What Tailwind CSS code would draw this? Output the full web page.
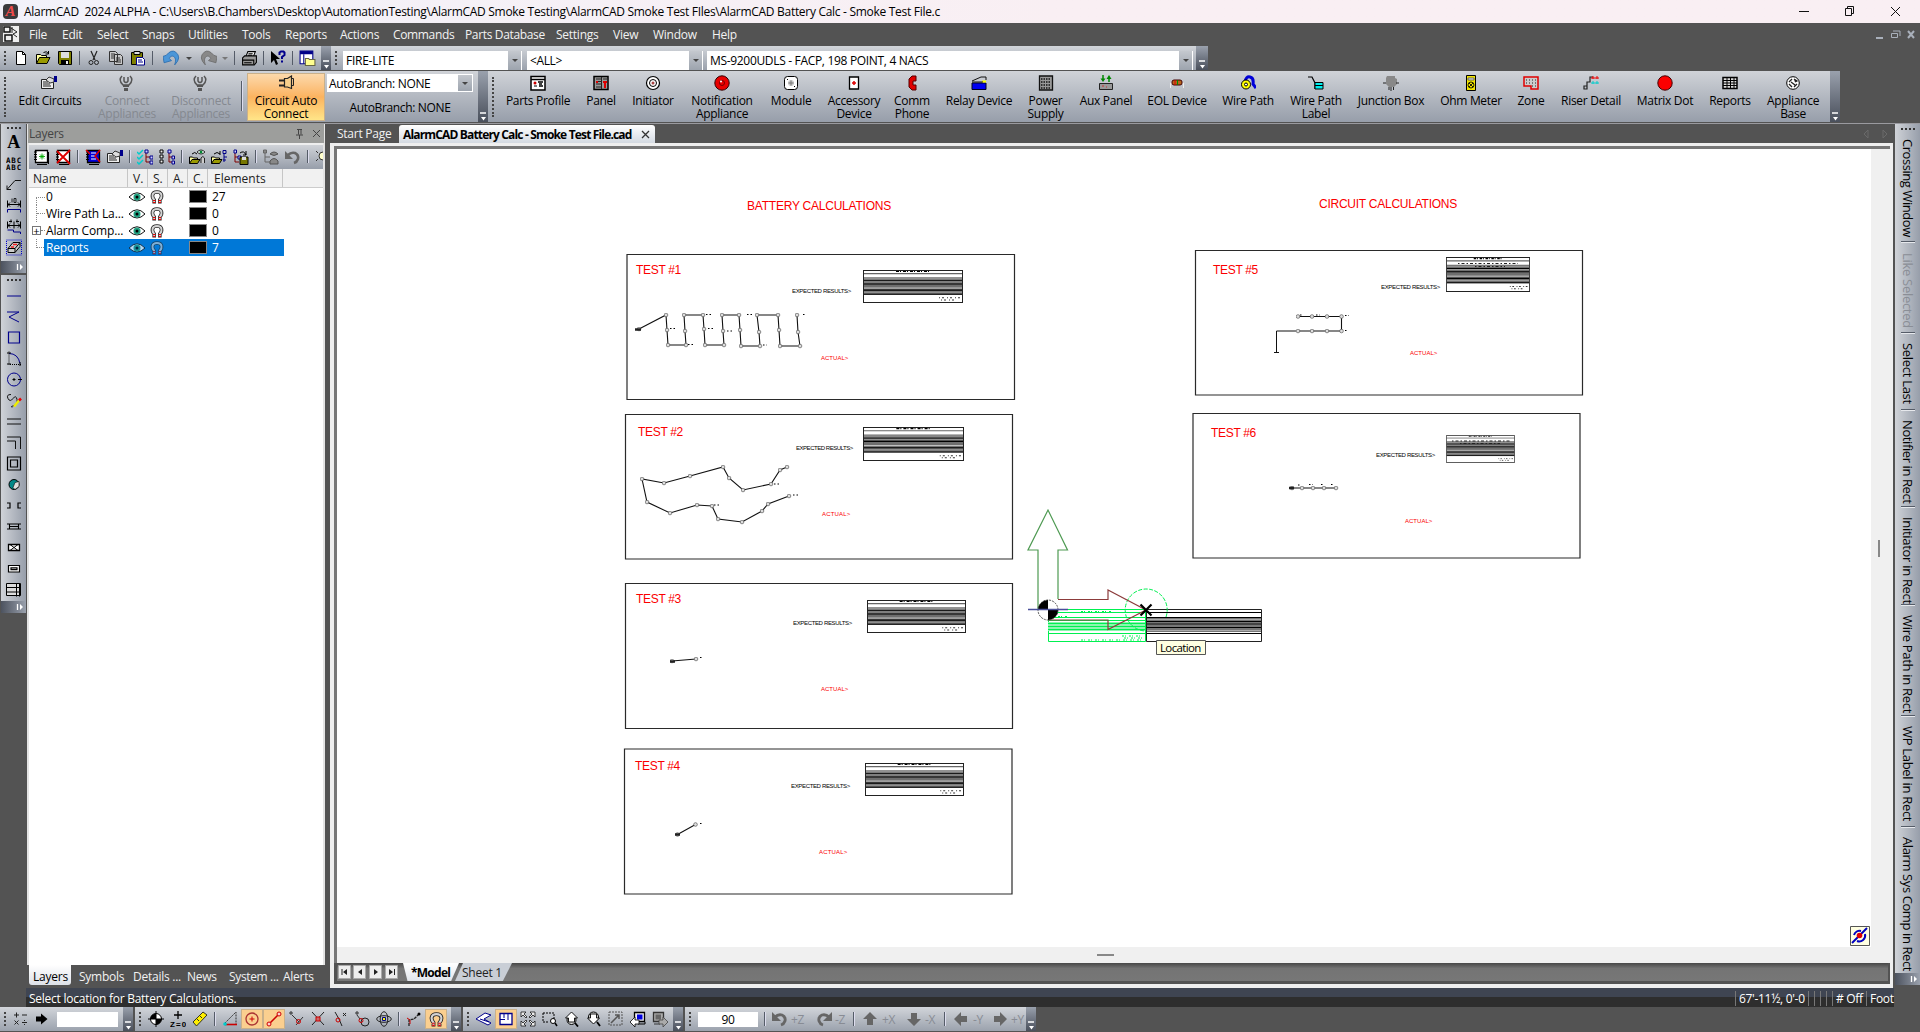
<!DOCTYPE html>
<html lang="en">
<head>
<meta charset="utf-8">
<title>AlarmCAD 2024 ALPHA</title>
<script src="https://cdn.jsdelivr.net/npm/@tailwindcss/browser@4"></script>
</head>
<body class="w-[1920px] h-[1032px] overflow-hidden bg-[#535353] font-['Open_Sans','Noto_Sans',sans-serif] text-[12px] leading-[13px] tracking-[-0.25px] text-black flex flex-col whitespace-nowrap">

<svg class="hidden">
  <defs>
    <symbol id="new" viewBox="0 0 16 16"><path d="M3.500 1.500h6l3 3v10h-9z" fill="#fff" stroke="#000"/><path d="M9.500 1.500v3h3" fill="none" stroke="#000"/></symbol>
    <symbol id="open" viewBox="0 0 16 16"><path d="M1.500 13.500v-9h4l1 1h5v2" fill="#ffffa0" stroke="#000"/><path d="M1.500 13.500l3-6h10.500l-3 6z" fill="#9a9a00" stroke="#000"/><path d="M8.500 2.500q3-2 5 1M13.500 1v3h-3" fill="none" stroke="#000"/></symbol>
    <symbol id="save" viewBox="0 0 16 16"><path d="M1.500 1.500h13v13h-12l-1-1z" fill="#808000" stroke="#000"/><path d="M4 2h8v6H4z" fill="#ddd"/><path d="M4 10h8v4H4z" fill="#000"/><path d="M9 11h2v3H9z" fill="#eee"/></symbol>
    <symbol id="cut" viewBox="0 0 16 16"><path d="M5 1l4 9M11 1l-4 9" stroke="#222" fill="none" stroke-width="1.200"/><circle cx="5" cy="12.500" r="2" fill="none" stroke="#222"/><circle cx="10.500" cy="12.500" r="2" fill="none" stroke="#222"/></symbol>
    <symbol id="copy" viewBox="0 0 16 16"><path d="M1.500 1.500h6l2 2v8h-8zM6.500 4.500h6l2 2v8h-8z" fill="#c8c8c8" stroke="#333"/><path d="M3 4h4M3 6h3M3 8h3M8 8h4M8 10h5M8 12h5" stroke="#333"/></symbol>
    <symbol id="paste" viewBox="0 0 16 16"><path d="M1.500 2.500h11v12h-11z" fill="#808000" stroke="#000"/><path d="M4 1.500h6v3H4z" fill="#ddd" stroke="#000"/><path d="M6.500 7.500h6l2 2v5.500h-8z" fill="#fff" stroke="#008"/><path d="M8 10h4M8 12h5" stroke="#008"/></symbol>
    <symbol id="undo" viewBox="0 0 16 16"><path d="M0 6l3-1q5-6 9-3 6 5-1 12 2-6-1-8-3-1-4 2l2 2-7 2z" fill="#4b96d8" stroke="#2466a8" stroke-width=".7"/></symbol>
    <symbol id="redo" viewBox="0 0 16 16"><path d="M16 6l-3-1q-5-6-9-3-6 5 1 12-2-6 1-8 3-1 4 2l-2 2 7 2z" fill="#888" stroke="#666" stroke-width=".7"/></symbol>
    <symbol id="print" viewBox="0 0 16 16"><path d="M4.500 6.500l2-5h7l-2 5" fill="#fff" stroke="#000"/><path d="M1.500 7.500l2-2h11v6l-2 2.500h-11z" fill="#999" stroke="#000"/><path d="M1 9.500h11v4M3 12h7M7 3.500h4M6.500 5h4" stroke="#000" fill="none"/></symbol>
    <symbol id="help" viewBox="0 0 16 16"><path d="M1 1v12l3-3 2 5 2-1-2-5h4z"/><path d="M9.500 5V2.500l1.500-1h2.500l1 1V5L12 7v2M12 10.500v2" stroke="#00008b" stroke-width="2" fill="none"/></symbol>
    <symbol id="lay" viewBox="0 0 16 16"><path d="M1 1h12v12H1z" fill="#fff" stroke="#008"/><path d="M1 1h12v3H1z" fill="#008"/><path d="M4.500 4v9" stroke="#008"/><path d="M6 14.500V8h3l1 1h5v5.500z" fill="#ffff90" stroke="#664"/></symbol>
    <symbol id="card" viewBox="0 0 16 16"><path d="M.5 4.500h12v9H.5z" fill="#eee" stroke="#222"/><path d="M2 7h5M2 9h7M2 11h8" stroke="#222"/><path d="M5 5l3-3 5 2v3l-4 1z" fill="#ddd" stroke="#333"/><path d="M13 1h3v6h-3z" fill="#00008b"/></symbol>
    <symbol id="plug" viewBox="0 0 16 16"><path d="M4 1q-4 4 1 9h6q5-5 1-9M6 2v4q2 3 4 0V2" fill="none" stroke="#555" stroke-width="1.500"/><path d="M5 10h6v2H5zM6 13h4v3H6z" fill="#555"/></symbol>
    <symbol id="auto" viewBox="0 0 16 16"><path d="M6.500 3.500h3l4-2.500v12.500l-4-1.500h-3z" fill="#f8cf8c" stroke="#222" stroke-width="1.200"/><path d="M1 5.500h5M1 10.500h5" stroke="#222" stroke-width="2"/><path d="M13.500 3.500h2v7h-2" fill="none" stroke="#222"/></symbol>
    <symbol id="prof" viewBox="0 0 16 16"><path d="M1 1.500h14v13.500H1z" fill="#fff" stroke="#000" stroke-width="1.500"/><path d="M1 4.500h14M8 7h5M9 9h3M9 11h4" stroke="#000" stroke-width="1.300"/><circle cx="5" cy="8" r="1.500" fill="#c00"/><path d="M4 11h3" stroke="#000"/></symbol>
    <symbol id="panel" viewBox="0 0 16 16"><path d="M1 1.500h14v13H1z" fill="#999" stroke="#000" stroke-width="1.500"/><path d="M3 4h5M3 6.500h5M3 9h5M3 12h5M8.500 2v12M10 4h4" stroke="#222"/><path d="M10 6h4v2h-1v5h-2V8h-1zM3 6h2v2H3z" fill="#d00"/></symbol>
    <symbol id="init" viewBox="0 0 16 16"><circle cx="8" cy="8" r="6.500" fill="#fff" stroke="#000" stroke-width="1.200"/><circle cx="8" cy="8" r="3.500" fill="none" stroke="#000"/><circle cx="8" cy="8" r="1.500" fill="#a44"/></symbol>
    <symbol id="bell" viewBox="0 0 16 16"><circle cx="8" cy="8" r="7.200" fill="#e80000" stroke="#300"/><circle cx="8" cy="8" r="2.500" fill="none" stroke="#700"/><circle cx="7" cy="6.500" r="1" fill="#fff"/></symbol>
    <symbol id="mod" viewBox="0 0 16 16"><rect x="1.500" y="1.500" width="13" height="13" rx="3" fill="#fff" stroke="#000"/><circle cx="8" cy="8" r="3" fill="#ccc"/><path d="M8 5.500v5M5.500 8h5" stroke="#777"/><path d="M4 4h1v1H4zM11 11h1v1h-1z"/></symbol>
    <symbol id="acc" viewBox="0 0 16 16"><path d="M3.500 2h9v12h-9z" fill="#fff" stroke="#000" stroke-width="1.300"/><path d="M8 6v4M6 8h4" stroke="#d00" stroke-width="1.500"/></symbol>
    <symbol id="phone" viewBox="0 0 16 16"><path d="M8 1h4v5H9v4h3v5H8l-3-3V4z" fill="#e00000" stroke="#500"/></symbol>
    <symbol id="relay" viewBox="0 0 16 16"><path d="M1 8h14v6.500H1z" fill="#0000f0" stroke="#002"/><path d="M11 6.500h4" stroke="#ff0" stroke-width="2"/><path d="M1 6l9-4h5v3M1 7h11" fill="none" stroke="#111"/></symbol>
    <symbol id="pwr" viewBox="0 0 16 16"><path d="M1.500 1h13v14h-13z" fill="#999" stroke="#111" stroke-width="1.300"/><path d="M3 4h10M3 7h10M3 10h10M3 13h10" stroke="#111" stroke-width="1.600" stroke-dasharray="1.500 1"/></symbol>
    <symbol id="aux" viewBox="0 0 16 16"><path d="M1.500 8.500h13v6h-13z" fill="#999" stroke="#222"/><path d="M5 0v4M11 7V3" stroke="#080" stroke-width="1.500"/><path d="M2.500 3.500h5L5 7zM8.500 4h5L11 0z" fill="#080"/><path d="M4 11h2M8 12h1" stroke="#c33"/></symbol>
    <symbol id="eol" viewBox="0 0 16 16"><path d="M1.500 13V8h13v5" fill="none" stroke="#eee"/><rect x="3" y="5" width="10" height="5" rx="2" fill="#b5651d" stroke="#400"/><path d="M6 5v5" stroke="#d00"/><path d="M8.500 5v5" stroke="#080"/></symbol>
    <symbol id="wire" viewBox="0 0 16 16"><path d="M5 7q1-6 5-5 4 1 3 7l3 4" stroke="#0000d8" stroke-width="3" fill="none"/><circle cx="6" cy="9.500" r="4.500" fill="#ff0" stroke="#000"/><circle cx="6" cy="9.500" r="1.500" fill="#fff" stroke="#000"/></symbol>
    <symbol id="wlab" viewBox="0 0 16 16"><path d="M0 2h4l3 6v6" fill="none" stroke="#000" stroke-width="1.200"/><path d="M7 7.500h8v6.500H7zM7 10.500h8" fill="#0ee" stroke="#000"/></symbol>
    <symbol id="junc" viewBox="0 0 16 16"><path d="M4 1h8v2l2 1v5l-3 3H6l-3-3V3z" fill="#888"/><path d="M0 8h3M13 8h3M8 12v4M10.500 12v3M6 12v3" stroke="#222"/></symbol>
    <symbol id="ohm" viewBox="0 0 16 16"><path d="M3.500.5h9v15h-9z" fill="#f2e500" stroke="#000"/><path d="M5 3h6v2H5z" fill="#eef" stroke="#665"/><circle cx="8" cy="10" r="3" fill="none" stroke="#220"/><path d="M6 8l4 4M10 8l-4 4" stroke="#220"/></symbol>
    <symbol id="zone" viewBox="0 0 16 16"><path d="M1 2h14v12H8v-3H1z" fill="#ccc" stroke="#e00000" stroke-width="1.500"/><path d="M3 5h10M3 8h10M9 11h4" stroke="#222" stroke-dasharray="1 2"/></symbol>
    <symbol id="riser" viewBox="0 0 16 16"><path d="M1 11h3v3H1zM4 13V7h3V2h3" fill="none" stroke="#222" stroke-width="1.200"/><path d="M8 3h8M10 1v3M14 1v3" stroke="#e00"/><path d="M8 8h8M10 6v3M14 6v3" stroke="#0cc"/></symbol>
    <symbol id="dot" viewBox="0 0 16 16"><circle cx="8" cy="8" r="7.200" fill="#fb0000" stroke="#400"/></symbol>
    <symbol id="rep" viewBox="0 0 16 16"><path d="M1 2.500h14v11H1z" fill="#ddd" stroke="#000" stroke-width="1.500"/><path d="M1 5.500h14M1 8h14M1 10.500h14M5 3v10M8.500 3v10M12 3v10" stroke="#000"/></symbol>
    <symbol id="base" viewBox="0 0 16 16"><circle cx="8" cy="8" r="6.300" fill="#fff" stroke="#000"/><path d="M4 7l3-3M9 4l3 2-2 1M4 9l3 3M12 9l-3 3M6 7l4 3" stroke="#222" stroke-width="1.300"/></symbol>

    <symbol id="eye" viewBox="0 0 16 10"><path d="M0 5Q8-3.500 16 5 8 13 0 5z" fill="#fff" stroke="#111"/><circle cx="8" cy="5" r="3.500" fill="#20a080"/><circle cx="8" cy="5" r="1.500"/></symbol>
    <symbol id="mag" viewBox="0 0 14 14"><path d="M4.200 13.500V10C1.500 7 1.500 2 7 2s5.500 5 2.800 8v3.500" stroke="#222" stroke-width="3.600" fill="none"/><path d="M4.200 13V10C1.500 7 1.500 2 7 2s5.500 5 2.800 8v3" stroke="#d4d4d4" stroke-width="2" fill="none"/><path d="M3 10.500h2.300M8.700 10.500H11M3 12.500h2.300M8.700 12.500H11" stroke="#e00"/></symbol>
    <symbol id="lnew" viewBox="0 0 16 16"><path d="M2.500 1.500h12v12h-12z" fill="#fff" stroke="#000" stroke-width="1.300"/><path d="M14 15.500H4M15.500 3v12" stroke="#000"/><path d="M1 3h3M1 5.500h3M1 8h3M1 10.500h3" stroke="#000"/><path d="M9 4.500v6M6 7.500h6M7 5.500l4 4M11 5.500l-4 4" stroke="#0a0" stroke-width=".9"/></symbol>
    <symbol id="ldel" viewBox="0 0 16 16"><path d="M2.500 1.500h12v12h-12z" fill="#fff" stroke="#000" stroke-width="1.300"/><path d="M14 15.500H4M1 3h3M1 5.500h3M1 8h3M1 10.500h3" stroke="#000"/><path d="M2 2l13 13M15 1L2 14" stroke="#d00" stroke-width="1.800"/></symbol>
    <symbol id="lblu" viewBox="0 0 16 16"><path d="M2.500 1.500h12v12h-12z" fill="#00d" stroke="#000" stroke-width="1.300"/><path d="M14 15.500H4M1 3h3M1 5.500h3M1 8h3M1 10.500h3" stroke="#000"/><path d="M6 4h5M6 7h4M6 10h5" stroke="#fff"/><path d="M1 1l4 4M15 1l-5 6 5 6" stroke="#d00" stroke-width="1.500" fill="none"/></symbol>
    <symbol id="tree1" viewBox="0 0 16 16"><path d="M0 3l2 2 4-4M0 8l2 2 4-4M0 13l2 2 4-4" stroke="#0cc" fill="none" stroke-width="1.500"/><path d="M9 2v11h4M9 8h4" stroke="#800000" fill="none"/><path d="M8 1h3v3H8zM13 7h3v3h-3zM13 12h3v3h-3z" fill="#ccf" stroke="#008"/></symbol>
    <symbol id="tree2" viewBox="0 0 16 16"><path d="M1 1h3v3H1zM1 6h3v3H1zM1 11h3v3H1z" fill="#eee" stroke="#000"/><path d="M10 2v11h4M10 8h4" stroke="#800000" fill="none"/><path d="M9 1h3v3H9zM13 7h2.500v3H13zM13 12h2.500v3H13z" fill="#ccf" stroke="#008"/></symbol>
    <symbol id="tree3" viewBox="0 0 16 16"><path d="M2 2v11h4M2 8h4" stroke="#800000" fill="none"/><path d="M1 1h2.500v3H1zM5 7h3v3H5z" fill="#ccf" stroke="#008"/><path d="M7 8h8v7.500H7z" fill="#770" stroke="#000"/><path d="M9 8h4v3H9z" fill="#ddd"/><path d="M7 4q4-3 6 2M13 2v4h-3" fill="none" stroke="#000"/></symbol>
    <symbol id="topen" viewBox="0 0 16 16"><path d="M.5 14.500V8h3l1 1h4v2" fill="#ffffa0" stroke="#000"/><path d="M.5 14.500l2.500-4h8l-2.500 4z" fill="#9a9a00" stroke="#000"/><path d="M3 5q3-3 6 0M9 2v4" fill="none" stroke="#000"/><path d="M12 1.500h3v3h-3zM13 4v9M13 8h3M12 11h3" fill="none" stroke="#008"/></symbol>
    <symbol id="eopen" viewBox="0 0 16 16"><path d="M.5 14.500V8h3l1 1h4v2" fill="#ffffa0" stroke="#000"/><path d="M.5 14.500l2.500-4h8l-2.500 4z" fill="#9a9a00" stroke="#000"/><path d="M3 5q3-3 5 0" fill="none" stroke="#000"/><path d="M8 3q4-4 8 0-4 4-8 0z" fill="#fff" stroke="#000" stroke-width=".8"/><circle cx="12" cy="3" r="1.500" fill="#083"/><path d="M12 14V9q2-3 3.500 0v5" fill="#ccc" stroke="#222"/></symbol>
    <symbol id="tgray" viewBox="0 0 16 16"><path d="M2 2v11h5M2 8h5" stroke="#666" fill="none"/><path d="M.5 1h3v3h-3z" fill="#888" stroke="#666"/><path d="M7 5q4-4 8 0-4 3-8 0M7 12q4-5 8 0v3H7z" fill="#888" stroke="#555"/></symbol>
    <symbol id="back" viewBox="0 0 16 16"><path d="M3 6q3-3 7-2 4 2 3 6-1 3-4 4" stroke="#666" stroke-width="2.600" fill="none"/><path d="M0 2v8h8z" fill="#666"/></symbol>

    <symbol id="abc" viewBox="0 0 16 16"><g font-family="DejaVu Sans Mono,monospace" font-size="7.500" font-weight="bold"><text x="0" y="7" textLength="15">ABC</text><text x="0" y="14.500" textLength="15">ABC</text></g></symbol>
    <symbol id="lead" viewBox="0 0 16 16"><path d="M1 13l8-9h6" fill="none" stroke="#111"/><path d="M1 9v4h4" fill="none" stroke="#111"/></symbol>
    <symbol id="dim" viewBox="0 0 16 16"><path d="M1.500 3v7M14.500 3v7M1 7h14M4 5L2 7l2 2M12 5l2 2-2 2" stroke="#000" fill="none"/><path d="M6 1v4M8 1h2v4H8z" stroke="#000" fill="none" stroke-width=".8"/><path d="M1.500 15v-3h13v3" fill="none" stroke="#008"/></symbol>
    <symbol id="dim2" viewBox="0 0 16 16"><path d="M1.500 3v7M8 3v7M14.500 3v7M1 7h14M4 5L2 7l2 2M12 5l2 2-2 2M3 3h3M10 3h3M5 1v3M11 1v3" stroke="#000" fill="none"/><path d="M1.500 11.500h6v2h7v2" fill="none" stroke="#008"/></symbol>
    <symbol id="erase" viewBox="0 0 16 16"><path d="M.5.500h15v15H.5z" fill="none" stroke="#00c" stroke-dasharray="1 1"/><path d="M2 9l5-6h7v4l-5 6H2z" fill="#ccc" stroke="#000"/><path d="M2 9h7v4M9 9l5-6" fill="none" stroke="#000"/><path d="M5 7.500h3M7 5h4" stroke="#e22" stroke-width="1.500"/></symbol>
    <symbol id="line" viewBox="0 0 16 16"><path d="M1 8.500h14" stroke="#00008b"/></symbol>
    <symbol id="poly" viewBox="0 0 16 16"><path d="M1 3.500h12L3 8.500l10 5" fill="none" stroke="#00008b"/></symbol>
    <symbol id="sq" viewBox="0 0 16 16"><path d="M2.500 2.500h11v11h-11z" fill="none" stroke="#00008b" stroke-width="1.200"/></symbol>
    <symbol id="arc" viewBox="0 0 16 16"><path d="M3 3q9 0 11 10" fill="none" stroke="#00008b"/><path d="M3 1v13h12" fill="none" stroke="#000" stroke-dasharray="1 1"/><path d="M1 2.500h4M14 11.500v4M1 13.500h4" stroke="#000"/></symbol>
    <symbol id="circ" viewBox="0 0 16 16"><circle cx="8" cy="8" r="6.500" fill="none" stroke="#00008b"/><path d="M8 6.500v3M6.500 8h3M12 8h4" stroke="#000"/></symbol>
    <symbol id="curve" viewBox="0 0 16 16"><path d="M5 2Q0 2 2 6t5 0 4 1-3 6-2 2" fill="none" stroke="#111"/><path d="M8 14l5-6" stroke="#ee0" stroke-width="2.500"/><path d="M13 8l2-2" stroke="#e00" stroke-width="2.500"/></symbol>
    <symbol id="dbl" viewBox="0 0 16 16"><path d="M1 5.500h14M1 10.500h14" stroke="#111"/></symbol>
    <symbol id="corner" viewBox="0 0 16 16"><path d="M1 2.500h13.500v12M1 6.500h8.500v8" fill="none" stroke="#111"/></symbol>
    <symbol id="sq2" viewBox="0 0 16 16"><path d="M1.500 1.500h13v13h-13zM4.500 4.500h7v7h-7z" fill="none" stroke="#000" stroke-width="1.200"/></symbol>
    <symbol id="ball" viewBox="0 0 16 16"><circle cx="8" cy="8" r="5" fill="#088" stroke="#000"/><path d="M13 5v5l-4 3-2-2 2-5z" fill="#ddd" stroke="#000" stroke-width=".6"/></symbol>
    <symbol id="gap" viewBox="0 0 16 16"><path d="M1 5.500h3v5H1M15 5.500h-3v5h3" fill="none" stroke="#000" stroke-width="1.200"/></symbol>
    <symbol id="win1" viewBox="0 0 16 16"><path d="M1 5.500h14M1 10.500h14M3.500 5v6M12.500 5v6M4 8h8" stroke="#000" stroke-width="1.100"/></symbol>
    <symbol id="win2" viewBox="0 0 16 16"><path d="M2.500 5h11v6h-11z" fill="#fff" stroke="#000" stroke-width="1.300"/><path d="M4 5l8 6M12 5l-8 6" stroke="#000"/></symbol>
    <symbol id="win3" viewBox="0 0 16 16"><path d="M2.500 5h11v6.500h-11zM5 7.300h6v1.900H5z" fill="#fff" stroke="#000" stroke-width="1.200"/></symbol>
    <symbol id="grid" viewBox="0 0 16 16"><path d="M.5 2h14v12H.5z" fill="#ddd" stroke="#000"/><path d="M0 6h15M0 10.500h15M10.500 2v13M13.500 2v13" stroke="#000"/></symbol>

    <symbol id="calc" viewBox="0 0 16 16"><path d="M1 4h5M3.500 1.500v5M9 4h5M1.500 9.500l4 4M5.500 9.500l-4 4M9 11.500h5M11.500 9v1M11.500 13v1" stroke="#222"/></symbol>
    <symbol id="arr" viewBox="0 0 16 16"><path d="M3 5.500h5V2.500L14.500 8 8 13.500v-3H3z"/></symbol>
    <symbol id="orig" viewBox="0 0 16 16"><circle cx="8" cy="8" r="5.500" fill="#fff" stroke="#000"/><path d="M8 8V2.500A5.500 5.500 0 0 0 2.500 8zM8 8v5.500A5.500 5.500 0 0 0 13.500 8z"/><path d="M8 0v16M0 8h16" stroke="#000"/></symbol>
    <symbol id="z0" viewBox="0 0 16 16"><path d="M8 0v8M4 4h8" stroke="#000" stroke-width="1.300"/><text x="0" y="15.500" font-size="8" font-weight="bold" font-family="Liberation Sans" textLength="16">Z=0</text></symbol>
    <symbol id="ruler" viewBox="0 0 16 16"><path d="M1 11L11 1l4 3L4.500 15z" fill="#fe0" stroke="#332"/><path d="M5 8l2 2M8 5l2 2" stroke="#332"/></symbol>
    <symbol id="tri" viewBox="0 0 16 16"><path d="M3 12L14 1v12" stroke="#333" fill="none" stroke-dasharray="2 1"/><path d="M3 13.500h12" stroke="#c00" stroke-width="1.600"/><circle cx="3" cy="13" r="1.800" fill="#0cc"/></symbol>
    <symbol id="sc" viewBox="0 0 16 16"><circle cx="8" cy="8" r="6" fill="none" stroke="#a33" stroke-width="1.300"/><path d="M8 5.500v5M5.500 8h5" stroke="#c00"/></symbol>
    <symbol id="se" viewBox="0 0 16 16"><path d="M3 13L13 3" stroke="#c00" stroke-width="1.500"/><circle cx="3" cy="13" r="2" fill="#fcc" stroke="#c00"/><circle cx="13" cy="3" r="2" fill="#fcc" stroke="#c00"/></symbol>
    <symbol id="sp" viewBox="0 0 16 16"><path d="M1 2h4M3 0v4M4 4l7 7M8 14l7-8" stroke="#333" fill="none"/><circle cx="10.500" cy="10.500" r="2" fill="none" stroke="#c00"/></symbol>
    <symbol id="sx" viewBox="0 0 16 16"><path d="M2 1l12 13M14 1L2 14" stroke="#222"/><path d="M6 6h4v4H6z" fill="#c66" stroke="#c00"/></symbol>
    <symbol id="sn" viewBox="0 0 16 16"><path d="M3 1l4 7 3 7" stroke="#222" fill="none"/><circle cx="6" cy="9" r="2" fill="none" stroke="#c00"/><path d="M11 2l3 3M14 2l-3 3" stroke="#222"/></symbol>
    <symbol id="st" viewBox="0 0 16 16"><path d="M1 2h4M3 0v4M3 4l3 4" stroke="#333"/><circle cx="11" cy="11" r="4" fill="none" stroke="#222"/><circle cx="7" cy="9.500" r="2" fill="none" stroke="#c00"/></symbol>
    <symbol id="sg" viewBox="0 0 16 16"><ellipse cx="8" cy="8" rx="7.300" ry="3.300" fill="none" stroke="#222"/><ellipse cx="8" cy="8" rx="3.800" ry="7.300" fill="none" stroke="#222"/><path d="M6.500 6.500h3v3h-3z" fill="#ff0" stroke="#008"/></symbol>
    <symbol id="sl" viewBox="0 0 16 16"><path d="M3 15V9l5-1 5-5" fill="none" stroke="#222" stroke-width="1.300" stroke-dasharray="3 .8"/><path d="M1 7l3 2v4" stroke="#c00" fill="none"/><circle cx="13" cy="3" r="1.500"/></symbol>
    <symbol id="v3" viewBox="0 0 16 16"><path d="M0 8l9-6 6 2-7 4 7 4-3 2z" fill="#fff" stroke="#00008b"/><path d="M4 8l9 3" stroke="#00008b"/></symbol>
    <symbol id="vp" viewBox="0 0 16 16"><path d="M2 2.500h12v11H2z" fill="#fff" stroke="#00008b" stroke-width="1.300"/><path d="M6 3v4M10 3v6M2 8.500h5" stroke="#00008b"/></symbol>
    <symbol id="ext" viewBox="0 0 16 16"><path d="M1 1h5L4 3l3 3-1 1-3-3-2 2zM15 1h-5l2 2-3 3 1 1 3-3 2 2zM1 15h5l-2-2 3-3-1-1-3 3-2-2zM15 15h-5l2-2-3-3 1-1 3 3 2-2z" fill="#eee" stroke="#000" stroke-width=".7"/></symbol>
    <symbol id="zw" viewBox="0 0 16 16"><path d="M1 2h11v7M1 2v9h6" fill="none" stroke="#000" stroke-dasharray="2 1"/><circle cx="11" cy="10" r="2.500" fill="#fff" stroke="#000"/><path d="M13 12l2 3" stroke="#000" stroke-width="1.500"/></symbol>
    <symbol id="zin" viewBox="0 0 16 16"><circle cx="7.500" cy="9" r="4.500" fill="#ddd" stroke="#000"/><path d="M7.500 1l6 6h-3v4h-6V7h-3z" fill="#fff" stroke="#000" stroke-width=".9"/><path d="M11 12l3 3.500" stroke="#000" stroke-width="1.800"/></symbol>
    <symbol id="zout" viewBox="0 0 16 16"><circle cx="7.500" cy="6" r="5" fill="#ddd" stroke="#000"/><path d="M7.500 13l6-6h-3V3h-6v4h-3z" fill="#fff" stroke="#000" stroke-width=".9"/><path d="M11 11l3 4" stroke="#000" stroke-width="1.800"/></symbol>
    <symbol id="zg" viewBox="0 0 16 16"><path d="M1 1h13v13H1z" fill="none" stroke="#555" stroke-dasharray="2 1"/><path d="M3 12l8-8M11 8V4H7" stroke="#555" stroke-width="1.500" fill="none"/></symbol>
    <symbol id="vprev" viewBox="0 0 16 16"><path d="M4.500 1.500h10v9h-10z" fill="#eee" stroke="#000" stroke-width="1.300"/><path d="M7 3.500h5.500v5H7z" fill="#0000e0"/><path d="M8 13h7v-2" fill="none" stroke="#000"/><path d="M0 11l5-5v3h4v4H5v3z" fill="#fff" stroke="#000" stroke-width=".8"/></symbol>
    <symbol id="vnext" viewBox="0 0 16 16"><path d="M1.500 1.500h10v9h-10z" fill="#aaa" stroke="#333" stroke-width="1.300"/><path d="M3.500 3.500H9v5H3.500z" fill="#666"/><path d="M2 13h6" stroke="#333"/><path d="M16 11l-5-5v3H7v4h4v3z" fill="#aaa" stroke="#444" stroke-width=".8"/></symbol>
    <symbol id="rl" viewBox="0 0 16 16"><path d="M3 6q3-3 7-2 4 2 3 6-1 3-4 4" stroke="#666" stroke-width="2.800" fill="none"/><path d="M0 1v9h9z" fill="#666"/></symbol>
    <symbol id="rr" viewBox="0 0 16 16"><path d="M13 6q-3-3-7-2-4 2-3 6 1 3 4 4" stroke="#666" stroke-width="2.800" fill="none"/><path d="M16 1v9H7z" fill="#666"/></symbol>
    <symbol id="up" viewBox="0 0 16 16"><path d="M8 1l7 7h-4v6H5V8H1z" fill="#666"/></symbol>
    <symbol id="dn" viewBox="0 0 16 16"><path d="M8 15l7-7h-4V2H5v6H1z" fill="#666"/></symbol>
    <symbol id="lf" viewBox="0 0 16 16"><path d="M1 8l7-7v4h6v6H8v4z" fill="#666"/></symbol>
    <symbol id="rt" viewBox="0 0 16 16"><path d="M15 8L8 1v4H2v6h6v4z" fill="#666"/></symbol>
    <symbol id="ovf" viewBox="0 0 8 10"><path d="M1 1h6" stroke="#fff" stroke-width="1.500"/><path d="M2 5h5L4.500 8.500z" fill="#fff"/></symbol>
    <symbol id="ovr" viewBox="0 0 8 8"><path d="M1.500 1v6" stroke="#fff" stroke-width="1.300"/><path d="M4 1v6l3-3z" fill="#fff"/></symbol>

    <symbol id="tbl" viewBox="0 0 100 32" preserveAspectRatio="none">
      <path d="M0 0h100v32H0z" fill="#fff"/><path d="M1 7h98v17H1z" fill="#6e6e6e"/>
      <path d="M1 10.500h98M1 13.500h98M1 19.500h98M1 23.500h98" stroke="#000"/>
      <path d="M1 8.500h98M1 11.500h98M1 21.500h98" stroke="#aaa" stroke-width=".8"/><path d="M1 17.500h98" stroke="#ddd" stroke-width=".8"/><path d="M1 3.500h98" stroke="#666"/>
      <path d="M33 1.500h33" stroke="#000" stroke-dasharray="3 1 1 2"/><path d="M76 27h22M78 29h14" stroke="#333" stroke-dasharray="1 2 2 3"/>
      <path d="M.5.500h99v31H.5z" fill="none" stroke="#222"/>
    </symbol>
  </defs>
</svg>

<!-- Title bar -->
<header class="h-[23px] shrink-0 flex items-center bg-linear-to-r from-[#f2f2fa] to-[#f9eff3] to-55% pl-[3px]">
  <div class="size-[15px] bg-[#3a3a3c] rounded-sm flex items-center justify-center text-[#f04a4a] font-['Liberation_Serif',serif] font-bold italic text-[15px]">A</div>
  <div class="ml-[6px] whitespace-pre tracking-[-0.295px]">AlarmCAD  2024 ALPHA - C:\Users\B.Chambers\Desktop\AutomationTesting\AlarmCAD Smoke Testing\AlarmCAD Smoke Test FIles\AlarmCAD Battery Calc - Smoke Test File.c</div>
  <svg class="ml-auto mr-[14px] w-[112px] h-[14px] -mt-[2px]" fill="none" stroke="#111"><path d="M5 7.500h10M51.500 4.500h6v7h-6zM53.500 4V2.500h6v7h-2M97 3l9 9M106 3l-9 9"/></svg>
</header>

<!-- Menu -->
<nav class="h-[23px] shrink-0 flex items-center text-[#f2f2f2] pl-[3px] pb-px">
  <svg class="size-[16px]" viewBox="0 0 16 16"><path d="M0 0h16v16H0z" fill="#eee"/><path d="M1 1h6v5H1zM2 9h7v6H2z" fill="none" stroke="#111" stroke-width="1.500"/><path d="M8 2l6 4-4 2 4 3M9 1v6" stroke="#222" fill="none"/></svg>
  <div class="ml-[10px] w-[33px]">File</div><div class="w-[35px]">Edit</div><div class="w-[45px]">Select</div><div class="w-[46px]">Snaps</div><div class="w-[54px]">Utilities</div><div class="w-[43px]">Tools</div><div class="w-[55px]">Reports</div><div class="w-[53px]">Actions</div><div class="w-[72px] tracking-[-0.35px]">Commands</div><div class="w-[91px] tracking-[-0.35px]">Parts Database</div><div class="w-[57px]">Settings</div><div class="w-[40px]">View</div><div class="w-[59px]">Window</div><div>Help</div>
  <svg class="ml-auto mr-[5px] w-[40px] h-[14px]" fill="none" stroke="#a9b0bb"><path d="M1 11h7" stroke-width="2"/><path d="M16.500 6.500h6v4h-6zM18 4h7v5"/><path d="M33 4l6 7M39 4l-6 7" stroke-width="2"/></svg>
</nav>

<!-- Toolbar row 1 -->
<div class="h-[25px] shrink-0 flex">
  <div class="w-[321px] h-[24px] flex items-center bg-linear-to-b from-[#d2d5da] to-[#9ba2ad]">
    <div class="ml-1 mr-[4px] w-[2px] h-[14px] border-l-2 border-dotted border-[#444]"></div>
    <div class="w-[22px] flex justify-center"><svg class="size-[16px]"><use href="#new"/></svg></div>
    <div class="w-[22px] flex justify-center"><svg class="size-[16px]"><use href="#open"/></svg></div>
    <div class="w-[22px] flex justify-center"><svg class="size-[16px]"><use href="#save"/></svg></div>
    <div class="mx-[3px] w-px h-[14px] bg-[#555c68]"></div>
    <div class="w-[22px] flex justify-center"><svg class="size-[16px]"><use href="#cut"/></svg></div>
    <div class="w-[22px] flex justify-center"><svg class="size-[16px]"><use href="#copy"/></svg></div>
    <div class="w-[22px] flex justify-center"><svg class="size-[16px]"><use href="#paste"/></svg></div>
    <div class="mx-[3px] w-px h-[14px] bg-[#555c68]"></div>
    <div class="ml-1 w-[22px] flex justify-center"><svg class="size-[17px]"><use href="#undo"/></svg></div>
    <div class="ml-1 size-0 border-x-3 border-t-3 border-x-transparent border-t-[#444]"></div>
    <div class="ml-[4px] w-[24px] flex justify-center"><svg class="size-[17px]"><use href="#redo"/></svg></div>
    <div class="ml-[2px] size-0 border-x-3 border-t-3 border-x-transparent border-t-[#777]"></div>
    <div class="ml-[6px] mr-[3px] w-px h-[14px] bg-[#555c68]"></div>
    <div class="w-[22px] flex justify-center"><svg class="size-[17px]"><use href="#print"/></svg></div>
    <div class="mx-[3px] w-px h-[14px] bg-[#555c68]"></div>
    <div class="w-[22px] flex justify-center"><svg class="size-[16px]"><use href="#help"/></svg></div>
    <div class="mx-[3px] w-px h-[14px] bg-[#555c68]"></div>
    <div class="w-[22px] flex justify-center"><svg class="size-[17px]"><use href="#lay"/></svg></div>
  </div>
  <div class="w-[10px] h-[24px] flex items-end justify-center bg-linear-to-b from-[#9aa1ad] to-[#4a505c]"><svg class="w-[8px] h-[10px]"><use href="#ovf"/></svg></div>
  <div class="w-[865px] h-[24px] flex items-center bg-linear-to-b from-[#d2d5da] to-[#9ba2ad]">
    <div class="ml-1 w-[2px] h-[14px] border-l-2 border-dotted border-[#444]"></div>
    <div class="ml-[6px] mt-1 w-[179px] h-[19px] bg-white flex items-center pl-[3px]">FIRE-LITE<div class="ml-auto mr-px w-[13px] h-[19px] flex items-center justify-center bg-linear-to-b from-[#c4c8ce] to-[#9da4ae]"><div class="border-x-3 border-t-3 border-x-transparent border-t-[#444]"></div></div></div>
    <div class="ml-[5px] mt-1 w-[176px] h-[19px] bg-white flex items-center pl-[3px] tracking-[-0.4px]">&lt;ALL&gt;<div class="ml-auto mr-px w-[13px] h-[19px] flex items-center justify-center bg-linear-to-b from-[#c4c8ce] to-[#9da4ae]"><div class="border-x-3 border-t-3 border-x-transparent border-t-[#444]"></div></div></div>
    <div class="ml-[4px] mt-1 w-[486px] h-[19px] bg-white flex items-center pl-[3px] tracking-[-0.32px]">MS-9200UDLS - FACP, 198 POINT, 4 NACS<div class="ml-auto mr-px w-[13px] h-[19px] flex items-center justify-center bg-linear-to-b from-[#c4c8ce] to-[#9da4ae]"><div class="border-x-3 border-t-3 border-x-transparent border-t-[#444]"></div></div></div>
  </div>
  <div class="w-[12px] h-[24px] flex items-end justify-center bg-linear-to-b from-[#9aa1ad] to-[#4a505c]"><svg class="w-[8px] h-[10px]"><use href="#ovf"/></svg></div>
</div>

<!-- Toolbar row 2 -->
<div class="h-[52px] shrink-0 flex text-center">
  <div class="w-[478px] h-[51px] flex bg-linear-to-b from-[#d0d3d8] to-[#979eaa]">
    <div class="ml-1 mt-[6px] mr-2 w-[2px] h-[40px] border-l-2 border-dotted border-[#444]"></div>
    <div class="w-[72px] pt-[4px] flex flex-col items-center gap-[3px]"><svg class="size-[16px] -ml-[2px]"><use href="#card"/></svg>Edit Circuits</div>
    <div class="w-[82px] pt-[4px] flex flex-col items-center gap-[3px] text-[#858990]"><svg class="size-[16px] -ml-[2px]"><use href="#plug"/></svg><div>Connect<br>Appliances</div></div>
    <div class="w-[66px] pt-[4px] flex flex-col items-center gap-[3px] text-[#858990]"><svg class="size-[16px] -ml-[2px]"><use href="#plug"/></svg><div>Disconnect<br>Appliances</div></div>
    <div class="ml-[7px] mr-[4px] mt-[10px] w-[2px] h-[30px] border-l border-[#555c68] bg-[#dde]"></div>
    <div class="mt-[2px] w-[78px] h-[48px] pt-px flex flex-col items-center gap-[3px] border border-[#c9b08a] bg-linear-to-b from-[#fcd9ab] via-[#fbb35f] to-[#ffe588]"><svg class="size-[16px]"><use href="#auto"/></svg><div>Circuit Auto<br>Connect</div></div>
    <div class="ml-[2px] w-[146px] pt-[3px]">
      <div class="h-[18px] bg-white flex items-center pl-[2px] tracking-[-0.32px]">AutoBranch: NONE<div class="ml-auto mr-px w-[14px] h-[16px] flex items-center justify-center bg-linear-to-b from-[#c4c8ce] to-[#9da4ae]"><div class="border-x-3 border-t-3 border-x-transparent border-t-[#444]"></div></div></div>
      <div class="mt-[9px] tracking-[-0.35px]">AutoBranch: NONE</div>
    </div>
  </div>
  <div class="w-[10px] h-[51px] flex items-end justify-center bg-linear-to-b from-[#9aa1ad] to-[#4a505c]"><svg class="w-[8px] h-[10px]"><use href="#ovf"/></svg></div>
  <div class="w-[1342px] h-[51px] flex bg-linear-to-b from-[#d0d3d8] to-[#979eaa] tracking-[-0.3px] [&>div]:shrink-0 [&>div>svg]:mx-auto [&>div>svg]:mb-[3px] [&>div>svg]:size-[16px]">
    <div class="ml-1 mt-[6px] mr-[6px] w-[2px] h-[40px] border-l-2 border-dotted border-[#444]"></div>
    <div class="w-[76px] pt-[4px]"><svg><use href="#prof"/></svg>Parts Profile</div>
    <div class="w-[50px] pt-[4px]"><svg><use href="#panel"/></svg>Panel</div>
    <div class="w-[54px] pt-[4px]"><svg><use href="#init"/></svg>Initiator</div>
    <div class="w-[84px] pt-[4px]"><svg><use href="#bell"/></svg>Notification<br>Appliance</div>
    <div class="w-[54px] pt-[4px]"><svg><use href="#mod"/></svg>Module</div>
    <div class="w-[72px] pt-[4px]"><svg><use href="#acc"/></svg>Accessory<br>Device</div>
    <div class="w-[44px] pt-[4px]"><svg><use href="#phone"/></svg>Comm<br>Phone</div>
    <div class="w-[90px] pt-[4px]"><svg><use href="#relay"/></svg>Relay Device</div>
    <div class="w-[43px] pt-[4px]"><svg><use href="#pwr"/></svg>Power<br>Supply</div>
    <div class="w-[78px] pt-[4px]"><svg><use href="#aux"/></svg>Aux Panel</div>
    <div class="w-[64px] pt-[4px]"><svg><use href="#eol"/></svg>EOL Device</div>
    <div class="w-[78px] pt-[4px]"><svg><use href="#wire"/></svg>Wire Path</div>
    <div class="w-[58px] pt-[4px]"><svg><use href="#wlab"/></svg>Wire Path<br>Label</div>
    <div class="w-[92px] pt-[4px]"><svg><use href="#junc"/></svg>Junction Box</div>
    <div class="w-[68px] pt-[4px]"><svg><use href="#ohm"/></svg>Ohm Meter</div>
    <div class="w-[52px] pt-[4px]"><svg><use href="#zone"/></svg>Zone</div>
    <div class="w-[68px] pt-[4px]"><svg><use href="#riser"/></svg>Riser Detail</div>
    <div class="w-[80px] pt-[4px]"><svg><use href="#dot"/></svg>Matrix Dot</div>
    <div class="w-[50px] pt-[4px]"><svg><use href="#rep"/></svg>Reports</div>
    <div class="w-[76px] pt-[4px]"><svg><use href="#base"/></svg>Appliance<br>Base</div>
  </div>
  <div class="w-[10px] h-[51px] flex items-end justify-center bg-linear-to-b from-[#9aa1ad] to-[#4a505c]"><svg class="w-[8px] h-[10px]"><use href="#ovf"/></svg></div>
</div>

<!-- Workspace -->
<div class="h-[884px] shrink-0 flex border-t border-[#9a9a9f]">
  <!-- Left tool strips -->
  <aside class="w-[25px] ml-px shrink-0 flex flex-col [&_svg]:mx-auto [&_svg]:shrink-0">
    <div class="h-[137px] pt-[3px] flex flex-col bg-linear-to-r from-[#d0d3d8] to-[#979eaa]">
      <div class="mx-auto w-[14px] h-[2px] mb-[3px] border-t-2 border-dotted border-[#333]"></div>
      <div class="h-[21px] text-center leading-[21px] text-[18px] font-bold font-['Liberation_Serif',serif]">A</div>
      <svg class="w-[16px] h-[21px]"><use href="#abc"/></svg>
      <svg class="w-[16px] h-[21px]"><use href="#lead"/></svg>
      <svg class="w-[16px] h-[21px]"><use href="#dim"/></svg>
      <svg class="w-[16px] h-[21px]"><use href="#dim2"/></svg>
      <svg class="w-[16px] h-[21px]"><use href="#erase"/></svg>
    </div>
    <div class="h-[12px] mb-[2px] pr-[2px] flex items-center bg-linear-to-r from-[#4d535f] to-[#9aa1ad]"><svg class="mr-0! size-[8px]"><use href="#ovr"/></svg></div>
    <div class="h-[326px] pt-[4px] flex flex-col bg-linear-to-r from-[#d0d3d8] to-[#979eaa]">
      <div class="mx-auto w-[14px] h-[2px] mb-[4px] border-t-2 border-dotted border-[#333]"></div>
      <svg class="w-[16px] h-[21px]"><use href="#line"/></svg>
      <svg class="w-[16px] h-[21px]"><use href="#poly"/></svg>
      <svg class="w-[16px] h-[21px]"><use href="#sq"/></svg>
      <svg class="w-[16px] h-[21px]"><use href="#arc"/></svg>
      <svg class="w-[16px] h-[21px]"><use href="#circ"/></svg>
      <svg class="w-[16px] h-[21px]"><use href="#curve"/></svg>
      <svg class="w-[16px] h-[21px]"><use href="#dbl"/></svg>
      <svg class="w-[16px] h-[21px]"><use href="#corner"/></svg>
      <svg class="w-[16px] h-[21px]"><use href="#sq2"/></svg>
      <svg class="w-[16px] h-[21px]"><use href="#ball"/></svg>
      <svg class="w-[16px] h-[21px]"><use href="#gap"/></svg>
      <svg class="w-[16px] h-[21px]"><use href="#win1"/></svg>
      <svg class="w-[16px] h-[21px]"><use href="#win2"/></svg>
      <svg class="w-[16px] h-[21px]"><use href="#win3"/></svg>
      <svg class="w-[16px] h-[21px]"><use href="#grid"/></svg>
    </div>
    <div class="h-[12px] pr-[2px] flex items-center bg-linear-to-r from-[#4d535f] to-[#9aa1ad]"><svg class="mr-0! size-[8px]"><use href="#ovr"/></svg></div>
  </aside>

  <!-- Center + status -->
  <div class="w-[1868px] shrink-0 flex flex-col">
    <div class="h-[864px] flex">
      <!-- Layers panel -->
      <section class="w-[299px] shrink-0 flex flex-col">
        <div class="h-[841px] flex flex-col border-x-2 border-[#e4e4e4] ml-px bg-white">
          <div class="h-[19px] shrink-0 flex items-center bg-[#9d9e9c] text-[#444] -mx-px pl-px pr-[2px]">Layers
            <svg class="ml-auto w-[28px] h-[12px]" fill="none" stroke="#444"><path d="M3 1.500h5M4.500 1.500v5M7 1.500v5M2 7h7M5.500 7v4"/><path d="M19 2l7 7M26 2l-7 7"/></svg>
          </div>
          <div class="h-[2px] shrink-0 bg-[#eee]"></div>
          <div class="h-[24px] shrink-0 flex items-center overflow-hidden bg-linear-to-b from-[#d0d3d8] to-[#979eaa] pl-px pb-px [&>svg]:mx-[3px] [&>svg]:size-[16px] [&>svg]:shrink-0 [&>i]:mx-[3px] [&>i]:w-[2px] [&>i]:h-[13px] [&>i]:border-l [&>i]:border-[#555c68] [&>i]:bg-[#dde] [&>i]:shrink-0">
            <svg><use href="#lnew"/></svg><svg><use href="#ldel"/></svg><i></i><svg><use href="#lblu"/></svg><svg><use href="#card"/></svg><i></i><svg><use href="#tree1"/></svg><svg><use href="#tree2"/></svg><i></i><svg><use href="#eopen"/></svg><svg><use href="#topen"/></svg><svg><use href="#tree3"/></svg><i></i><svg><use href="#tgray"/></svg><svg><use href="#back"/></svg><i></i>
            <svg class="-mr-2!" viewBox="0 0 16 16"><circle cx="8" cy="7" r="4" fill="#ffc" stroke="#333"/><path d="M1 2l2 2M1 12l2-2" stroke="#333"/></svg>
          </div>
          <div class="h-[19px] shrink-0 flex items-center bg-[#f1f1f1] border-b border-[#ccc] tracking-[0px] text-[#222] [&>div]:h-full [&>div]:border-r [&>div]:border-[#c6c6c6] [&>div]:pt-[3px]">
            <div class="w-[99px] pl-[4px]">Name</div><div class="w-[20px] pl-[5px]">V.</div><div class="w-[20px] pl-[5px]">S.</div><div class="w-[20px] pl-[5px]">A.</div><div class="w-[20px] pl-[5px]">C.</div><div class="w-[75px] pl-[6px]">Elements</div>
          </div>
          <div class="flex flex-col tracking-[-0.15px] [&>div]:h-[17px] [&>div]:flex [&>div]:items-center [&>div]:shrink-0">
            <div><div class="w-[7px]"></div><div class="w-[9px] h-full flex items-end flex-col"><div class="w-[8px] h-[9px] self-start"></div><div class="w-full h-[8px] border-l border-t border-dotted border-[#888]"></div></div><div class="w-[84px] pl-px">0</div><svg class="w-[16px] h-[10px]"><use href="#eye"/></svg><svg class="ml-[5px] size-[14px]"><use href="#mag"/></svg><div class="ml-[25px] w-[18px] h-[13px] bg-black border border-[#888]"></div><div class="pl-[5px]">27</div></div>
            <div><div class="w-[7px]"></div><div class="w-[9px] h-full border-l border-dotted border-[#888]"><div class="h-[9px] border-b border-dotted border-[#888]"></div></div><div class="w-[84px] pl-px">Wire Path La...</div><svg class="w-[16px] h-[10px]"><use href="#eye"/></svg><svg class="ml-[5px] size-[14px]"><use href="#mag"/></svg><div class="ml-[25px] w-[18px] h-[13px] bg-black border border-[#888]"></div><div class="pl-[5px]">0</div></div>
            <div><div class="w-[3px]"></div><div class="w-[9px] h-[9px] border border-[#777] bg-white text-[11px] leading-[7px] text-center tracking-normal">+</div><div class="w-[4px] border-t border-dotted border-[#888]"></div><div class="w-[84px] pl-px">Alarm Comp...</div><svg class="w-[16px] h-[10px]"><use href="#eye"/></svg><svg class="ml-[5px] size-[14px]"><use href="#mag"/></svg><div class="ml-[25px] w-[18px] h-[13px] bg-black border border-[#888]"></div><div class="pl-[5px]">0</div></div>
            <div><div class="w-[7px]"></div><div class="w-[8px] h-full"><div class="h-[9px] border-l border-b border-dotted border-[#888]"></div></div><div class="w-[240px] h-[17px] flex items-center bg-[#0078d7] text-white"><div class="w-[85px] pl-[2px]">Reports</div><svg class="w-[16px] h-[10px] opacity-70"><use href="#eye"/></svg><svg class="ml-[5px] size-[14px] opacity-60"><use href="#mag"/></svg><div class="ml-[25px] w-[18px] h-[13px] bg-black border border-[#888]"></div><div class="pl-[5px]">7</div></div></div>
          </div>
        </div>
        <div class="h-[20px] flex text-[#f2f2f2] pl-[3px] [&>div]:pt-[5px]">
          <div class="w-[42px] text-center text-black bg-linear-to-b from-white to-[#dde1e8] rounded-b-[3px] pl-px">Layers</div><div class="ml-[8px] w-[54px]">Symbols</div><div class="w-[54px]">Details ...</div><div class="w-[42px]">News</div><div class="w-[54px] tracking-[-0.35px]">System ...</div><div>Alerts</div>
        </div>
      </section>

      <!-- Document area -->
      <main class="ml-[5px] w-[1563px] flex flex-col">
        <div class="h-[19px] shrink-0 flex items-end text-[#f2f2f2]">
          <div class="pl-[7px] w-[69px] pb-[3px]">Start Page</div>
          <div class="w-[256px] h-[18px] pl-[4px] flex items-center rounded-t-[3px] bg-linear-to-b from-white to-[#d4dae2] text-black font-bold tracking-[-0.84px]">AlarmCAD Battery Calc - Smoke Test File.cad
            <svg class="ml-auto mr-[5px] size-[9px]" stroke="#333" stroke-width="1.300"><path d="M1 1l7 7M8 1L1 8"/></svg></div>
          <svg class="ml-auto mr-[4px] mb-1 w-[26px] h-[10px]" fill="none" stroke="#6a6a6a"><path d="M5 1v8L1 5zM20 1v8l4-4z"/></svg>
        </div>
        <div class="h-[845px] border-[3px] border-l-[4px] border-b-[4px] border-[#efefef] flex flex-col">
          <div class="h-[817px] border-t-3 border-l-3 border-[#777] bg-[#f0f0f0] flex flex-col">
            <div class="flex h-[798px]">
              <svg class="w-[1534px] h-[798px] shrink-0 bg-white" viewBox="337 149 1534 798" font-family="Liberation Sans, Arial, sans-serif" fill="none">
                <defs><marker id="node" viewBox="0 0 6 6" refX="3" refY="3" markerWidth="5" markerHeight="5" markerUnits="userSpaceOnUse"><circle cx="3" cy="3" r="2.200" fill="#ddd" stroke="#555" stroke-width=".8"/></marker></defs>
                <g stroke="#2a2a2a" stroke-width="1.200">
                  <path d="M627 254.500h387.500v145H627zM625.500 414.500h387v144.500h-387zM625.500 583.500h387v145h-387zM624.500 749h387.500v145H624.500zM1195.500 250.500h387v144.500h-387zM1193 413.500h387v144.500h-387z"/>
                </g>
                <g fill="#fb0000" font-size="12">
                  <text x="747" y="209.500" textLength="144" lengthAdjust="spacingAndGlyphs">BATTERY CALCULATIONS</text>
                  <text x="1319" y="207.500" textLength="138" lengthAdjust="spacingAndGlyphs">CIRCUIT CALCULATIONS</text>
                  <text x="636" y="274" textLength="45">TEST #1</text><text x="638" y="435.500" textLength="45">TEST #2</text><text x="636" y="603" textLength="45">TEST #3</text><text x="635" y="769.500" textLength="45">TEST #4</text><text x="1213" y="274" textLength="45">TEST #5</text><text x="1211" y="437" textLength="45">TEST #6</text>
                </g>
                <g fill="#000" font-size="6">
                  <text x="792" y="293" textLength="59">EXPECTED RESULTS&gt;</text><text x="796" y="450" textLength="57">EXPECTED RESULTS&gt;</text><text x="793" y="624.500" textLength="59">EXPECTED RESULTS&gt;</text><text x="791" y="788" textLength="59">EXPECTED RESULTS&gt;</text><text x="1381" y="288.500" textLength="59">EXPECTED RESULTS&gt;</text><text x="1376" y="457" textLength="59">EXPECTED RESULTS&gt;</text>
                </g>
                <g fill="#fb0000" font-size="6">
                  <text x="821" y="359.500" textLength="27">ACTUAL&gt;</text><text x="822" y="516" textLength="28">ACTUAL&gt;</text><text x="821" y="690.500" textLength="27">ACTUAL&gt;</text><text x="819" y="853.500" textLength="28">ACTUAL&gt;</text><text x="1410" y="354.500" textLength="27">ACTUAL&gt;</text><text x="1405" y="523" textLength="27">ACTUAL&gt;</text>
                </g>
                <use href="#tbl" x="863" y="270" width="100" height="33"/><use href="#tbl" x="863" y="427" width="101" height="34"/><use href="#tbl" x="867" y="600" width="99" height="33"/><use href="#tbl" x="865" y="763" width="99" height="33"/><use href="#tbl" x="1446" y="257" width="84" height="35"/><use href="#tbl" x="1446" y="435" width="69" height="28"/>
                <path d="M1458 263.500h60M1475 266.500h30M1452 441h58M1460 443.500h40" stroke="#222" stroke-dasharray="1.500 2 3 2"/>
                <g stroke="#111" stroke-width="1.100" marker-start="url(#node)" marker-mid="url(#node)" marker-end="url(#node)">
                  <polyline points="639,329 666,315 667,330 668,345 686,345 685,331 684,315 703,315 704,329 705,345 724,345 723,331 722,315 739,315 740,330 741,346 760,346 759,332 757,315 778,315 779,330 780,346 800,346 798,332 797,315"/>
                  <polyline points="787,467 780,470 771,484 743,490 729,478 723,467 690,476 664,483 642,479 647,502 670,513 697,505 712,506 718,519 742,522 762,511 768,504 789,496"/>
                  <path d="M672 661l24-2M677.500 834.500l18-10"/>
                  <polyline points="1298,316.500 1312,316.500 1327,316.500 1341.500,316.500 1341.500,331 1327,331 1312,331 1298,331"/>
                  <path d="M1292 488h10l11 0 11 0h12"/>
                </g>
                <path d="M1296 331h-19.500v21M1274 352.500h5" stroke="#111"/>
                <path d="M635 329.500h6M670 661.500h5M675 834.500h5M1289 488h5" stroke="#222" stroke-width="2.500"/>
                <path d="M670 328.500h6M706 314.500h5M727 331h5M747 314.500h5M688 344.500h7M708 328.500h5M763 345h4M803 314.500h3M774 484h5M793 495h5M714 505h5M700 657.500h3M700 823.500h2M1345 315.500h4M1345 330.500h3M1300 315h3M1316 315h4M1298 485h2M1309 484.500h4M1321 484.500h2M1331 484.500h2" stroke="#000" stroke-dasharray="1.500 2"/>

                <g stroke="#00f050">
                  <path d="M1048.500 609.500h97v32h-97z"/><path d="M1048 622h97v9h-97z" fill="#8cf5b0" stroke="none"/>
                  <path d="M1048 612.500h97M1048 617.500h97M1048 620.500h97M1048 623.500h97M1048 626.500h97M1048 629.500h97M1048 633.500h97"/>
                  <path d="M1081 611.500h30M1058 616.500h10M1081 640h60M1122 636h20M1124 638h18" stroke-dasharray="2 1 1 3"/>
                </g>
                <path d="M1146.500 609.500h115v32h-115z" fill="#fff" stroke="#222"/>
                <path d="M1147 618h114v14h-114z" fill="#777"/>
                <path d="M1147 612.500h114M1147 617.500h114M1147 621.500h114M1147 627.500h114M1147 633.500h114" stroke="#000"/><path d="M1147 624h114" stroke="#444" stroke-width="2"/><path d="M1147 619.500h114M1147 630.500h114" stroke="#aaa"/>
                <path d="M1166 617a21 21 0 1 0-20 14" stroke="#00f050" stroke-dasharray="4 1.500"/>
                <path d="M1038 609v-59h-10l20-40 19.500 40h-9.500v49" stroke="#4e9a52" stroke-width="1.200"/>
                <path d="M1058 599.500h50v-9.500l38 20-38 19.500v-9.500h-60" stroke="#8c3b3b" stroke-width="1.200"/>
                <circle cx="1048" cy="610" r="10" stroke="#555" stroke-dasharray="2 1"/>
                <path d="M1048 610v-10a10 10 0 0 0-10 10zM1048 610v10a10 10 0 0 0 10-10z" fill="#000"/>
                <path d="M1028 609.500h40" stroke="#4a4f9a" stroke-width="1.500"/>
                <path d="M1140.500 604.500l11 11M1151.500 604.500l-11 11" stroke="#000" stroke-width="2.200"/>
                <path d="M1156.500 640.500h49v14h-49z" fill="#ffffe1" stroke="#555"/>
                <text x="1160" y="651.500" font-size="11.500" textLength="41" fill="#000" font-family="Open Sans, sans-serif">Location</text>
                <path d="M1850.500 926.500h19v19h-19z" fill="#ffffe1" stroke="#555"/>
                <path d="M1867 928l-15 15" stroke="#0000c0" stroke-width="2"/><path d="M1854 935a6 6 0 0 1 7-4M1865 934a6 6 0 0 1-8 7" stroke="#0000c0" stroke-width="2"/><circle cx="1859.500" cy="935.500" r="2.800" fill="#e00000"/>
              </svg>
              <div class="w-[16px] flex items-center justify-center"><div class="w-[2px] h-[17px] bg-[#888]"></div></div>
            </div>
            <div class="h-[16px] flex items-center justify-center pr-[17px]"><div class="w-[17px] h-[2px] bg-[#888]"></div></div>
          </div>
          <div class="h-[18px] mx-[3px] mr-[2px] flex items-center text-[#222] bg-linear-to-b from-[#484848] via-[#747474] via-30% to-[#777]">
            <svg class="w-[64px] h-[18px]" viewBox="0 0 64 18"><path d="M1.500 2.500h12v13h-12zM16.500 2.500h12v13h-12zM32.500 2.500h12v13h-12zM48.500 2.500h12v13h-12z" fill="#eee" stroke="#aaa"/><path d="M10 6v6L6 9zM25 6v6l-4-3zM37 6v6l4-3zM52 6v6l4-3z" fill="#222"/><path d="M5 6v6M57.500 6v6" stroke="#222"/></svg>
            <div class="h-full flex items-center ml-[2px] pl-[8px] w-[56px] bg-linear-to-b from-white to-[#e2e6ec] font-bold tracking-[-0.75px] [clip-path:polygon(0_0,100%_0,86%_100%,8%_100%)] text-black">*Model</div>
            <div class="h-full flex items-center pl-[7px] w-[57px] bg-[#c9ced6] [clip-path:polygon(8px_0,100%_0,84%_100%,0_100%)] -ml-[4px]">Sheet 1</div>
          </div>
        </div>
      </main>
    </div>
    <div class="h-[19px] pt-[2px] flex items-center text-white pl-[3px] bg-linear-to-b from-[#3f4552] from-45% to-[#2e2e2e] to-46% tracking-[-0.25px]">
      <div>Select location for Battery Calculations.</div>
      <div class="ml-auto h-[15px] flex items-center gap-[3px] tracking-[-0.3px] [&>i]:w-px [&>i]:h-[15px] [&>i]:bg-[#777]"><i></i><div class="w-[66px]">67'-11½, 0'-0</div><i></i><i class="ml-[2px]"></i><i class="ml-[2px]"></i><i class="ml-[2px]"></i><i class="ml-[2px]"></i><div class="w-[27px]"># Off</div><i></i><div class="w-[24px]">Foot</div></div>
    </div>
  </div>

  <!-- Right selection strip -->
  <aside class="w-[25px] shrink-0 ml-px flex flex-col">
    <div class="h-[849px] pt-[4px] flex flex-col items-center bg-linear-to-r from-[#d0d3d8] to-[#979eaa] text-[13px] leading-[16px] tracking-[-0.3px] [&>div]:[writing-mode:vertical-rl] [&>i]:w-[14px] [&>i]:h-[2px] [&>i]:shrink-0 [&>i]:bg-[#e6e8ec] [&>i]:border-t [&>i]:border-[#555c68]">
      <span class="w-[14px] h-[2px] border-t-2 border-dotted border-[#333]"></span>
      <div class="h-[111px] pt-[9px] tracking-[-0.45px]">Crossing Window</div><i></i>
      <div class="h-[89px] pt-[10px] text-[#8a8e96]">Like Selected</div><i></i>
      <div class="h-[75px] pt-[9px]">Select Last</div><i></i>
      <div class="h-[95px] pt-[9px] tracking-[-0.4px]">Notifier in Rect</div><i></i>
      <div class="h-[96px] pt-[9px]">Initiator in Rect</div><i></i>
      <div class="h-[109px] pt-[9px]">Wire Path in Rect</div><i></i>
      <div class="h-[109px] pt-[9px]">WP Label in Rect</div><i></i>
      <div class="h-[142px] pt-[9px] tracking-[-0.4px]">Alarm Sys Comp in Rect</div>
    </div>
    <div class="h-[12px] pr-[2px] flex items-center justify-end bg-linear-to-r from-[#4d535f] to-[#9aa1ad]"><svg class="size-[8px]"><use href="#ovr"/></svg></div>
  </aside>
</div>

<!-- Bottom toolbars -->
<footer class="h-[24px] shrink-0 flex text-[#888c94] [&>section]:flex [&>section]:items-center [&>section]:bg-linear-to-b [&>section]:from-[#d2d5da] [&>section]:to-[#9ba2ad] [&>section>svg]:size-[16px] [&>section>svg]:mx-[3px] [&>section>svg]:shrink-0 [&>section>i]:mx-[3px] [&>section>i]:w-[2px] [&>section>i]:h-[14px] [&>section>i]:border-l [&>section>i]:border-[#555c68] [&>section>i]:bg-[#dde] [&>section>b]:w-[22px] [&>section>b]:h-[20px] [&>section>b]:flex [&>section>b]:items-center [&>section>b]:justify-center [&>section>b]:border [&>section>b]:border-[#c9b08a] [&>section>b]:bg-[#fbcf8f] [&>section>u]:w-[2px] [&>section>u]:h-[14px] [&>section>u]:border-l-2 [&>section>u]:border-dotted [&>section>u]:border-[#444] [&>section>u]:ml-1 [&>section>u]:mr-[4px] [&>aside]:w-[10px] [&>aside]:mr-[2px] [&>aside]:flex [&>aside]:items-end [&>aside]:justify-center [&>aside]:bg-linear-to-b [&>aside]:from-[#9aa1ad] [&>aside]:to-[#4a505c]">
  <section class="w-[123px]"><u></u><svg><use href="#calc"/></svg><svg class="ml-[1px]!"><use href="#arr"/></svg><div class="ml-[5px] w-[61px] h-[15px] bg-white"></div></section>
  <aside><svg class="w-[8px] h-[10px]"><use href="#ovf"/></svg></aside>
  <section class="w-[316px]"><u></u><svg><use href="#orig"/></svg><svg><use href="#z0"/></svg><svg><use href="#ruler"/></svg><i></i><svg><use href="#tri"/></svg><b><svg class="size-[16px]"><use href="#sc"/></svg></b><b><svg class="size-[16px]"><use href="#se"/></svg></b><svg><use href="#sp"/></svg><svg><use href="#sx"/></svg><svg><use href="#sn"/></svg><svg><use href="#st"/></svg><svg><use href="#sg"/></svg><i></i><svg><use href="#sl"/></svg><b><svg class="size-[15px]"><use href="#mag"/></svg></b></section>
  <aside><svg class="w-[8px] h-[10px]"><use href="#ovf"/></svg></aside>
  <section class="w-[210px]"><u></u><svg><use href="#v3"/></svg><b><svg class="size-[16px]"><use href="#vp"/></svg></b><svg><use href="#ext"/></svg><svg><use href="#zw"/></svg><svg><use href="#zin"/></svg><svg><use href="#zout"/></svg><svg><use href="#zg"/></svg><svg><use href="#vprev"/></svg><svg><use href="#vnext"/></svg></section>
  <aside><svg class="w-[8px] h-[10px]"><use href="#ovf"/></svg></aside>
  <section class="w-[341px]"><u></u><div class="ml-[3px] w-[60px] h-[15px] bg-white text-black text-center leading-[15px]">90</div><i class="ml-[6px]!"></i><svg><use href="#rl"/></svg><div class="w-[22px]">+Z</div><svg><use href="#rr"/></svg><div class="w-[15px]">-Z</div><i></i><svg class="mx-[4px]!"><use href="#up"/></svg><div class="w-[21px]">+X</div><svg><use href="#dn"/></svg><div class="w-[16px]">-X</div><i></i><svg class="mx-[4px]!"><use href="#lf"/></svg><div class="w-[16px]">-Y</div><svg><use href="#rt"/></svg><div>+Y</div></section>
  <aside><svg class="w-[8px] h-[10px]"><use href="#ovf"/></svg></aside>
</footer>
</body>
</html>
